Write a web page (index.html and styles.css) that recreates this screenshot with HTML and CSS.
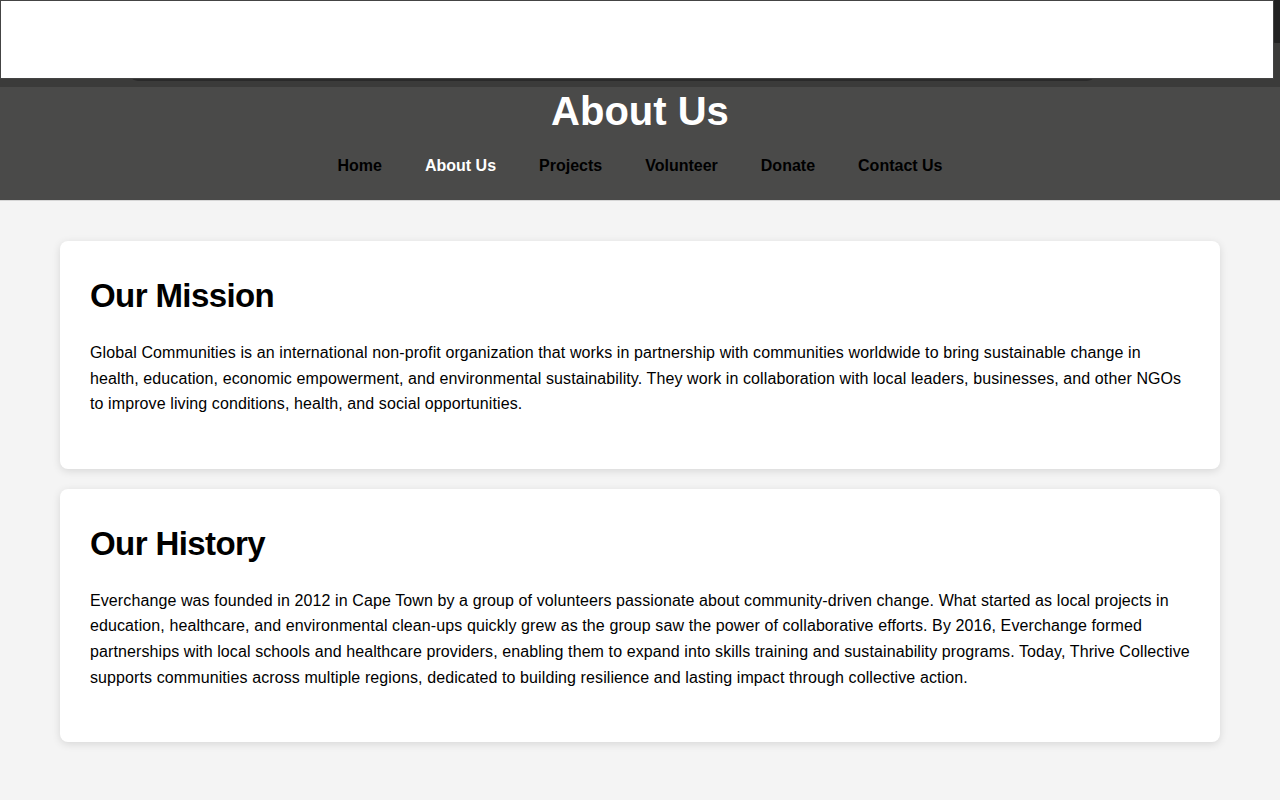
FILE: index.html
```html
<!DOCTYPE html>
<html lang="en">
<head>
<meta charset="utf-8">
<title>About Us</title>
<link rel="stylesheet" href="styles.css">
</head>
<body>
<header class="site-header">
  <div class="topbar">
    <div class="topbar-shade"></div>
    <div class="topbar-edge"></div>
    <div class="topbar-box"></div>
  </div>
  <h1 class="page-title">About Us</h1>
  <nav class="main-nav">
    <a href="#" class="nav-link">Home</a>
    <a href="#" class="nav-link active">About Us</a>
    <a href="#" class="nav-link">Projects</a>
    <a href="#" class="nav-link">Volunteer</a>
    <a href="#" class="nav-link">Donate</a>
    <a href="#" class="nav-link">Contact Us</a>
  </nav>
</header>
<main class="content">
  <section class="card">
    <h2 class="card-title">Our Mission</h2>
    <p class="card-text">Global Communities is an international non-profit organization that works in partnership with communities worldwide to bring sustainable change in health, education, economic empowerment, and environmental sustainability. They work in collaboration with local leaders, businesses, and other NGOs to improve living conditions, health, and social opportunities.</p>
  </section>
  <section class="card">
    <h2 class="card-title">Our History</h2>
    <p class="card-text">Everchange was founded in 2012 in Cape Town by a group of volunteers passionate about community-driven change. What started as local projects in education, healthcare, and environmental clean-ups quickly grew as the group saw the power of collaborative efforts. By 2016, Everchange formed partnerships with local schools and healthcare providers, enabling them to expand into skills training and sustainability programs. Today, Thrive Collective supports communities across multiple regions, dedicated to building resilience and lasting impact through collective action.</p>
  </section>
</main>
</body>
</html>
```
FILE: styles.css
```css
* { box-sizing: border-box; }
html, body { margin: 0; padding: 0; }
body {
  background: #f4f4f4;
  font-family: "Liberation Sans", Arial, sans-serif;
  color: #000;
}
.site-header {
  background: #4a4a49;
  height: 201px;
  border-bottom: 1px solid #d6d6d6;
  text-align: center;
}
.topbar {
  position: relative;
  height: 87px;
  background: #3b3b3a;
}
.topbar-box {
  position: absolute;
  left: 0;
  top: 0;
  width: 1274px;
  height: 79px;
  background: #fff;
  border: 1px solid #444;
}
.topbar-shade {
  position: absolute;
  left: 128px;
  top: 70px;
  width: 969px;
  height: 11px;
  background: #2a2a2a;
  border-radius: 0 0 10px 10px;
}
.topbar-edge {
  position: absolute;
  right: 0;
  top: 0;
  width: 12px;
  height: 43px;
  background: #222;
  border-radius: 0 0 0 8px;
}
.page-title {
  margin: 0;
  font-size: 40px;
  line-height: 48px;
  font-weight: 700;
  color: #fff;
}
.main-nav {
  display: flex;
  justify-content: center;
  gap: 43px;
  margin-top: 22px;
}
.nav-link {
  color: #000;
  text-decoration: none;
  font-size: 16px;
  line-height: 18px;
  font-weight: 700;
}
.nav-link.active { color: #fff; }
.content {
  padding: 40px 60px 58px;
  display: flex;
  flex-direction: column;
  gap: 20px;
}
.card {
  background: #fff;
  border-radius: 8px;
  padding: 30px 30px 30px;
  box-shadow: 0 2px 8px rgba(0, 0, 0, 0.12);
}
.card-title {
  margin: 0 0 19px;
  font-size: 33px;
  line-height: 50px;
  letter-spacing: -0.6px;
  font-weight: 700;
}
.card-text {
  margin: 0 0 22px;
  font-size: 16px;
  line-height: 25.6px;
  letter-spacing: 0.1px;
}
```
